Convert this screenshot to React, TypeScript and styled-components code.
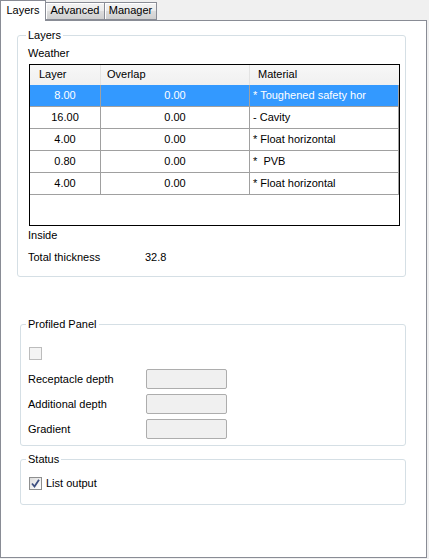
import { createGlobalStyle } from 'styled-components';
import styled from 'styled-components';

const GlobalStyle = createGlobalStyle`
  html, body {
    margin: 0;
    padding: 0;
    background: #f0f0f0;
  }
  body {
    font-family: 'Liberation Sans', Arial, sans-serif;
    font-size: 11px;
    line-height: 13px;
    color: #000;
  }
`;

const Window = styled.div`
  width: 429px;
  height: 559px;
`;

const TabStrip = styled.div`
  display: flex;
  align-items: flex-end;
  height: 20px;
  position: relative;
  z-index: 1;
`;

const Tab = styled.div<{ $active?: boolean; $width: number }>`
  box-sizing: border-box;
  width: ${p => p.$width}px;
  height: ${p => (p.$active ? 21 : 18)}px;
  margin-bottom: ${p => (p.$active ? -1 : 0)}px;
  margin-left: ${p => (p.$active ? 0 : -1)}px;
  border: 1px solid #898c95;
  border-bottom: ${p => (p.$active ? 'none' : '1px solid #898c95')};
  background: ${p =>
    p.$active ? '#fff' : 'linear-gradient(#f3f3f3, #ebebeb 50%, #dddddd 50%, #cfcfcf)'};
  box-shadow: ${p => (p.$active ? 'none' : 'inset 1px 1px 0 #fff')};
  text-align: center;
  line-height: ${p => (p.$active ? 18 : 15)}px;
  &:first-child {
    margin-left: 0;
  }
`;

const Panel = styled.div`
  box-sizing: border-box;
  width: 427px;
  height: 538px;
  border: 1px solid #898c95;
  background: #fff;
  padding-top: 8px;
`;

const Group = styled.fieldset<{ $left: number; $width: number; $top: number; $bottom: number }>`
  box-sizing: border-box;
  width: ${p => p.$width}px;
  margin: ${p => p.$top}px 0 0 ${p => p.$left}px;
  padding: 0 0 ${p => p.$bottom}px;
  border: 1px solid #d5dfe5;
  border-radius: 3px;
  min-width: 0;
`;

const Legend = styled.legend<{ $offset: number }>`
  margin-left: ${p => p.$offset}px;
  padding: 0 2px;
  line-height: 13px;
`;

const Text = styled.div<{ $left: number; $top: number }>`
  margin: ${p => p.$top}px 0 0 ${p => p.$left}px;
  height: 13px;
`;

const Grid = styled.div`
  box-sizing: border-box;
  width: 371px;
  height: 162px;
  margin: 4px 0 0 11px;
  border: 1px solid #000;
  background: #fff;
`;

const HeaderRow = styled.div`
  display: flex;
  height: 20px;
  background: linear-gradient(#f7f7f7 0%, #f4f4f4 45%, #f0f0f0 100%);
`;

const HeaderCell = styled.div<{ $width: number; $pad: number }>`
  box-sizing: border-box;
  width: ${p => p.$width}px;
  padding-left: ${p => p.$pad}px;
  line-height: 19px;
  border-right: 1px solid #e3e3e3;
  &:last-child {
    border-right: none;
  }
`;

const Row = styled.div<{ $selected?: boolean }>`
  display: flex;
  height: 22px;
  background: ${p => (p.$selected ? '#3399ff' : '#fff')};
  color: ${p => (p.$selected ? '#fff' : '#000')};
`;

const Cell = styled.div<{ $width: number; $align: 'center' | 'left' }>`
  box-sizing: border-box;
  width: ${p => p.$width}px;
  text-align: ${p => p.$align};
  padding-left: ${p => (p.$align === 'left' ? 3 : 0)}px;
  line-height: 21px;
  border-right: 1px solid #a0a0a0;
  border-bottom: 1px solid #a0a0a0;
  white-space: pre;
  overflow: hidden;
`;

const InfoRow = styled.div<{ $top: number }>`
  display: grid;
  grid-template-columns: 117px auto;
  margin: ${p => p.$top}px 0 0 10px;
  height: 13px;
`;

const Box = styled.div<{ $top: number }>`
  margin: ${p => p.$top}px 0 0 8px;
  display: flex;
  align-items: center;
  gap: 4px;
`;

const CheckSquare = styled.div<{ $disabled?: boolean }>`
  box-sizing: border-box;
  width: 13px;
  height: 13px;
  border: 1px solid ${p => (p.$disabled ? '#bcbcbc' : '#8e8f8f')};
  background: ${p =>
    p.$disabled ? '#f4f4f4' : 'linear-gradient(135deg, #dcdcdc, #f6f6f6 70%, #ffffff)'};
  display: flex;
  align-items: center;
  justify-content: center;
`;

const Fields = styled.div`
  display: grid;
  grid-template-columns: 118px 81px;
  row-gap: 5px;
  align-items: center;
  margin: 9px 0 0 7px;
`;

const FieldBox = styled.div`
  box-sizing: border-box;
  width: 81px;
  height: 20px;
  border: 1px solid #adadad;
  border-radius: 2px;
  background: #f0f0f0;
`;

const columns = [
  { title: 'Layer', width: 71, pad: 9 },
  { title: 'Overlap', width: 149, pad: 6 },
  { title: 'Material', width: 149, pad: 8 },
];

const layers = [
  { layer: '8.00', overlap: '0.00', material: '* Toughened safety hor', selected: true },
  { layer: '16.00', overlap: '0.00', material: '- Cavity' },
  { layer: '4.00', overlap: '0.00', material: '* Float horizontal' },
  { layer: '0.80', overlap: '0.00', material: '*  PVB' },
  { layer: '4.00', overlap: '0.00', material: '* Float horizontal' },
];

const Check = () => (
  <svg width="9" height="9" viewBox="0 0 9 9">
    <path d="M1 4.5 L3.5 7.5 L8 0.8" fill="none" stroke="#3d4f80" strokeWidth="1.8" />
  </svg>
);

export default function App() {
  return (
    <Window>
      <GlobalStyle />
      <TabStrip>
        <Tab $active $width={46}>Layers</Tab>
        <Tab $width={60}>Advanced</Tab>
        <Tab $width={53}>Manager</Tab>
      </TabStrip>
      <Panel>
        <Group $left={16} $width={389} $top={0} $bottom={12}>
          <Legend $offset={8}>Layers</Legend>
          <Text $left={10} $top={5}>Weather</Text>
          <Grid>
            <HeaderRow>
              {columns.map(c => (
                <HeaderCell key={c.title} $width={c.width} $pad={c.pad}>
                  {c.title}
                </HeaderCell>
              ))}
            </HeaderRow>
            {layers.map((r, i) => (
              <Row key={i} $selected={r.selected}>
                <Cell $width={71} $align="center">{r.layer}</Cell>
                <Cell $width={149} $align="center">{r.overlap}</Cell>
                <Cell $width={149} $align="left">{r.material}</Cell>
              </Row>
            ))}
          </Grid>
          <Text $left={10} $top={3}>Inside</Text>
          <InfoRow $top={9}>
            <span>Total thickness</span>
            <span>32.8</span>
          </InfoRow>
        </Group>

        <Group $left={19} $width={386} $top={41} $bottom={6}>
          <Legend $offset={5}>Profiled Panel</Legend>
          <Box $top={16}>
            <CheckSquare $disabled />
          </Box>
          <Fields>
            <span>Receptacle depth</span>
            <FieldBox />
            <span>Additional depth</span>
            <FieldBox />
            <span>Gradient</span>
            <FieldBox />
          </Fields>
        </Group>

        <Group $left={19} $width={386} $top={7} $bottom={14}>
          <Legend $offset={5}>Status</Legend>
          <Box $top={11}>
            <CheckSquare>
              <Check />
            </CheckSquare>
            <span>List output</span>
          </Box>
        </Group>
      </Panel>
    </Window>
  );
}
